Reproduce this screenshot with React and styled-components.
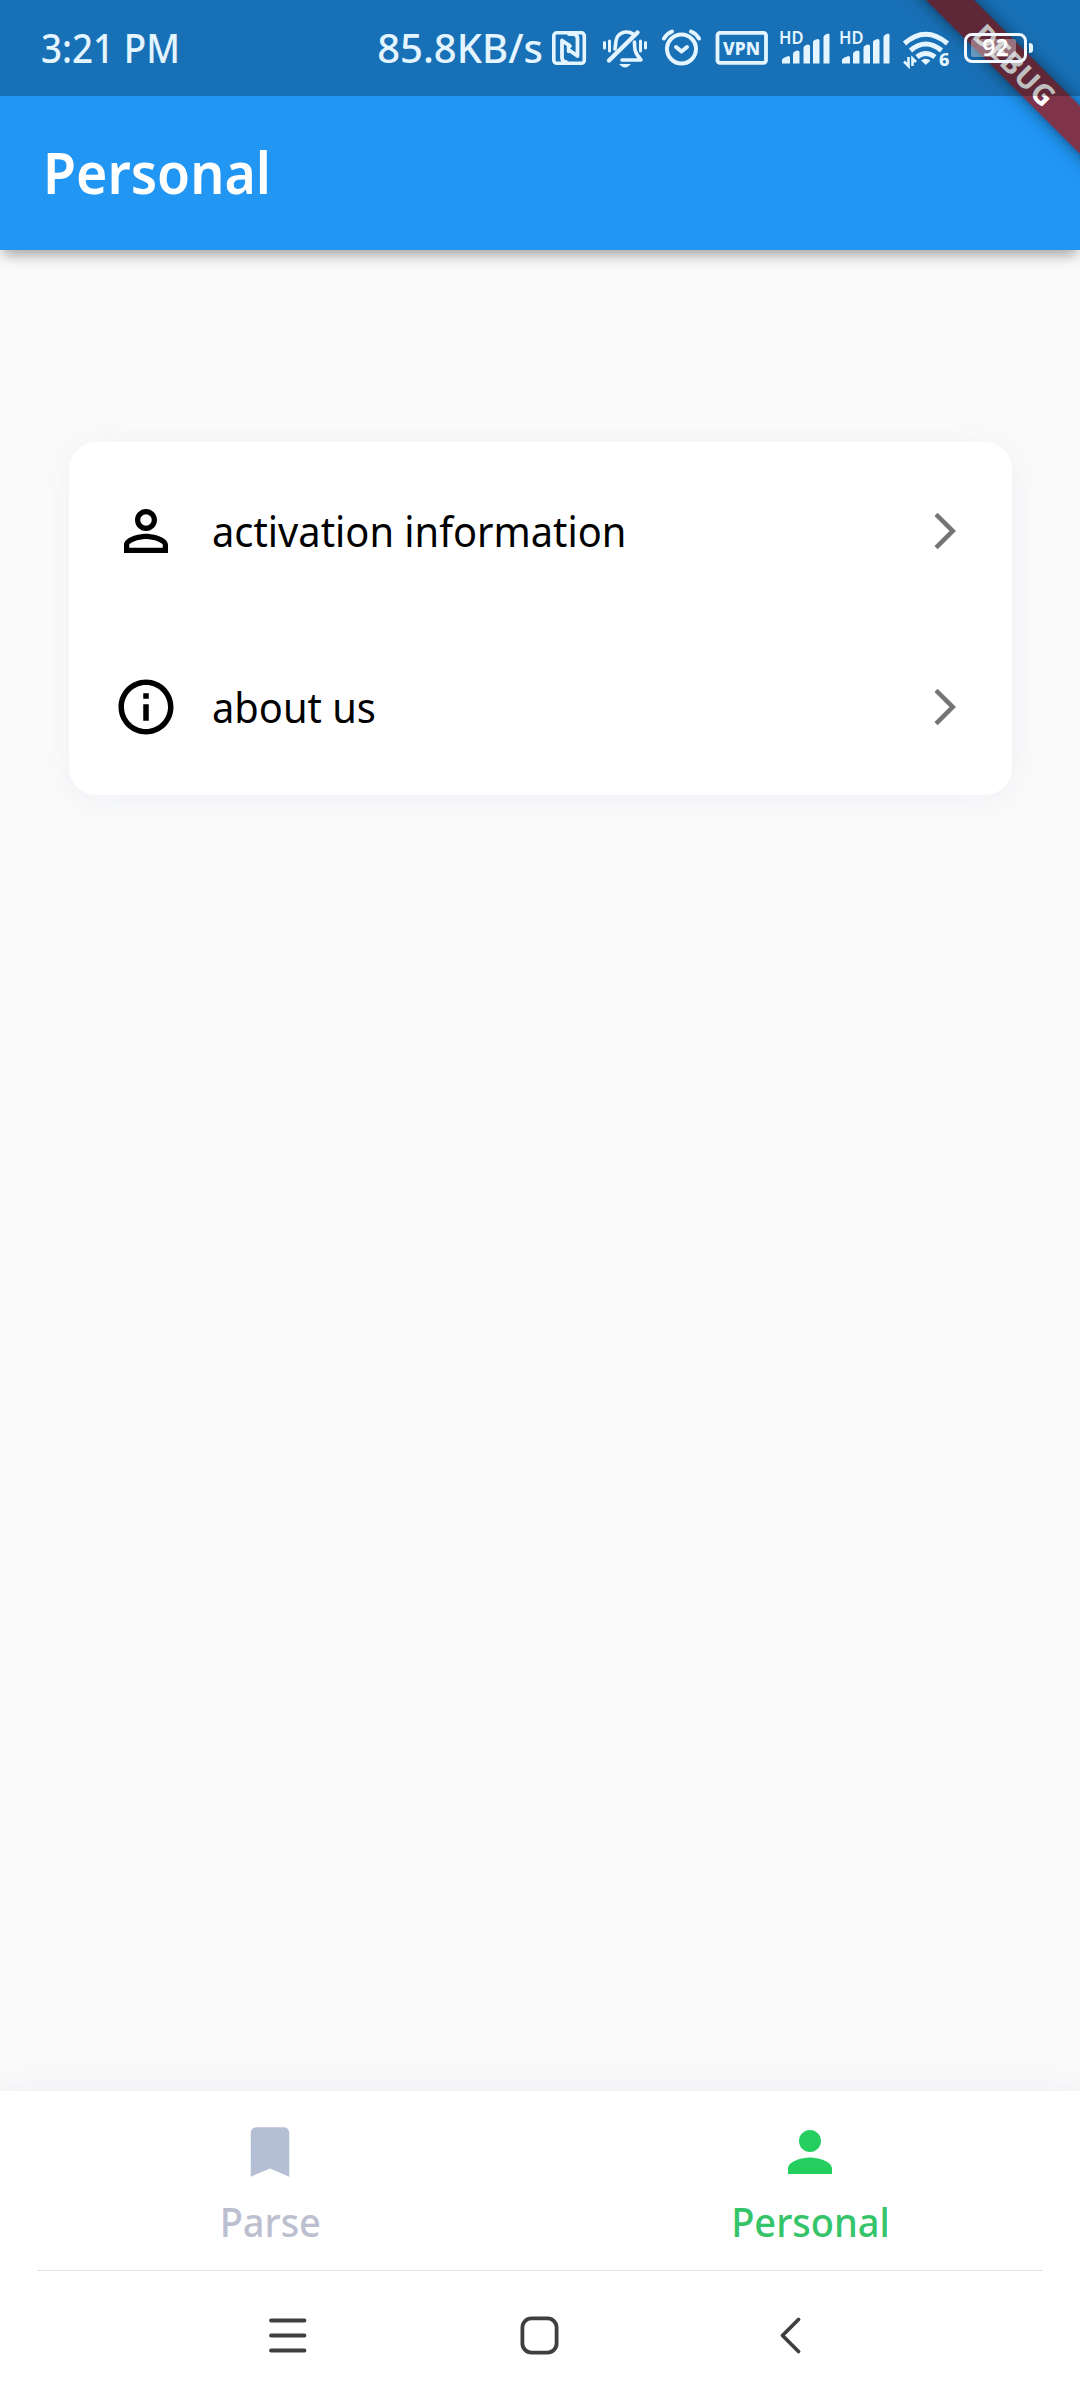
import React from 'react';
import styled, { createGlobalStyle } from 'styled-components';
import { MdPersonOutline, MdInfoOutline, MdArrowForwardIos, MdBookmark, MdPerson } from 'react-icons/md';

const GlobalStyle = createGlobalStyle`
    body {
        margin: 0;
        background-color: #fafafa;
        font-family: 'Noto Sans', 'Open Sans', sans-serif;
    }
`

const Page = styled.div`
    position: relative;
    width: 1080px;
    height: 2400px;
    overflow: hidden;
    display: flex;
    flex-flow: column;
    background-color: #fafafa;
`

const Header = styled.header`
    position: relative;
    height: 250px;
    background-color: #2196f3;
    box-shadow: 0 8px 13px -3px rgba(0, 0, 0, .35);
`

const StatusBar = styled.div`
    position: relative;
    z-index: 2;
    height: 96px;
    box-sizing: border-box;
    padding: 0 47px 0 41px;
    display: flex;
    align-items: flex-start;
    background-color: rgba(0, 0, 0, .25);
    color: #e4f5ff;

    svg {
        display: block;
        flex: none;
    }
`

const StatusText = styled.span`
    line-height: 54px;
    padding-top: 21px;
    padding-right: ${props => props.$gap || 0}px;
    font-size: 40px;
    font-weight: 500;
    white-space: nowrap;
    transform: scaleX(${props => props.$stretch || 1});
    transform-origin: left;
`

const StatusIcons = styled.div`
    margin-left: auto;
    display: flex;
`

const Title = styled.h1`
    margin: 0;
    padding: 36px 0 0 43px;
    line-height: 80px;
    font-size: 58px;
    font-weight: 600;
    color: #fff;

    span {
        display: inline-block;
        transform: scaleX(.925);
        transform-origin: left;
    }
`

const DebugBanner = styled.div`
    position: absolute;
    z-index: 1;
    left: 835px;
    top: 48px;
    width: 360px;
    height: 34px;
    transform: rotate(45deg);
    background-color: #80344c;
    box-shadow: 0 0 16px rgba(0, 0, 0, .5);
    color: #fff;
    font-size: 29px;
    line-height: 33px;
    font-weight: 700;
    letter-spacing: .5px;
    text-align: center;
`

const Content = styled.main`
    flex: 1;
    padding: 192px 68px 0 69px;
`

const Card = styled.section`
    height: 353px;
    border-radius: 27px;
    background-color: #fff;
    box-shadow: 0 3px 28px rgba(220, 225, 240, .35);
`

const MenuRow = styled.div`
    height: 176px;
    box-sizing: border-box;
    padding: 2px 45px 0 44px;
    display: flex;
    align-items: center;
    color: #000;
`

const MenuLabel = styled.span`
    flex: 1;
    margin-left: 33px;
    font-size: 42px;
    line-height: 56px;
    transform: scaleX(.948);
    transform-origin: left;
`

const BottomBar = styled.footer`
    position: relative;
    height: 309px;
    background-color: #fff;
    box-shadow: 0 0 28px rgba(220, 225, 240, .45);
`

const Tabs = styled.div`
    display: flex;
    height: 179px;
`

const Tab = styled.div`
    flex: 1;
    padding-top: 28px;
    display: flex;
    flex-flow: column;
    align-items: center;
    color: ${props => props.$active ? '#24cf5f' : '#b5bfd3'};
`

const TabLabel = styled.span`
    margin-top: 10px;
    font-size: 40px;
    line-height: 54px;
    font-weight: 550;
    transform: scaleX(.95);
    color: ${props => props.$active ? '#36c46a' : '#bcbfd0'};
`

const Divider = styled.div`
    height: 1px;
    margin: 0 37px;
    background-color: #e2e2e5;
`

const SystemNav = styled.div`
    height: 129px;
    padding: 0 262px 0 261px;
    display: flex;
    justify-content: space-between;
    align-items: center;
`

const NfcIcon = () => (
    <svg width="50" height="96" viewBox="552 0 50 96" fill="none" stroke="currentColor" strokeWidth="3.6" strokeLinejoin="round" strokeLinecap="round">
        <rect x="553.8" y="32.8" width="30.5" height="30.5" rx="3" />
        <path d="M569 34H573Q577.5 34 577.5 39V56L569 50M570 46L562 40.5V57Q562 62 566 62" strokeWidth="3.8" />
        <path d="M568.5 44.5V51.5" strokeWidth="3.4" />
    </svg>
)

const MuteIcon = () => (
    <svg width="60" height="96" viewBox="602 0 60 96" fill="none" stroke="currentColor" strokeWidth="3.6" strokeLinecap="round" strokeLinejoin="round">
        <path d="M637.5 32.5L609 60.5" strokeWidth="4.4" />
        <path d="M633 34C629 31 622 31 618 36C615 40 616 45 615 49" />
        <path d="M634.5 42C634.5 50 635 53 641 60H622" />
        <path d="M604.5 42.5V48M609.5 41V51M640.5 41V51M645.5 42.5V48" strokeWidth="3" />
        <path d="M619 64H631Q625 71 619 64Z" fill="currentColor" stroke="none" />
    </svg>
)

const AlarmIcon = () => (
    <svg width="53" height="96" viewBox="662 0 53 96" fill="none" stroke="currentColor" strokeWidth="4" strokeLinecap="round" strokeLinejoin="round">
        <circle cx="681.5" cy="49" r="14.5" />
        <path d="M676 47L681.5 51.5L687 47" />
        <path d="M664 38.5Q667 33.5 672 31.5M699 38.5Q696 33.5 691 31.5" />
    </svg>
)

const VpnIcon = () => (
    <svg width="63" height="96" viewBox="715 0 63 96" fill="none">
        <rect x="717.5" y="32.8" width="48.5" height="30" rx="2.5" stroke="currentColor" strokeWidth="3.8" />
        <text x="741.5" y="54.5" textAnchor="middle" textLength="37" lengthAdjust="spacingAndGlyphs" fontSize="18.5" fontWeight="800" fill="currentColor">VPN</text>
    </svg>
)

const SignalIcon = () => (
    <svg width="60" height="96" viewBox="778 0 60 96" fill="currentColor">
        <text x="779" y="44" textLength="24.5" lengthAdjust="spacingAndGlyphs" fontSize="17" fontWeight="600">HD</text>
        <path d="M782 63.5V60Q782 58 788.5 56Q790 56 790 58V63.5ZM793 63.5V54Q793 51.5 797.5 50.5Q799.5 50.5 799.5 52V63.5ZM803.5 63.5V48Q803.5 45.5 808 44.5Q810 44.5 810 46V63.5ZM813 63.5V42Q813 40 818 39Q819.5 39 819.5 41V63.5ZM823.5 63.5V37Q823.5 35 828 33.5Q829.5 33.5 829.5 35V63.5Z" />
    </svg>
)

const WifiIcon = () => (
    <svg width="65" height="96" viewBox="898 0 65 96" fill="none" stroke="currentColor" strokeWidth="5">
        <path d="M904.5 43.5Q925.5 25 947.5 43.5" />
        <path d="M910.5 50.5Q925.5 37.5 941.5 50.5" />
        <path d="M917 57Q925.5 50 935 57" />
        <path d="M921 60.5Q925.5 57 930.5 60.5L925.8 65Z" fill="currentColor" stroke="none" />
        <path d="M908.5 57V66L904 61.5M912.5 66V58.5L916 62" strokeWidth="2.6" />
        <text x="939" y="66" fontSize="18" fontWeight="800" fill="currentColor" stroke="none">6</text>
    </svg>
)

const BatteryIcon = () => (
    <svg width="70" height="96" viewBox="963 0 70 96" fill="none">
        <rect x="965.5" y="34.5" width="60" height="27" rx="6.5" stroke="#f1f8ff" strokeWidth="3" />
        <rect x="971" y="39" width="45" height="18" rx="2" fill="#fff" opacity=".35" />
        <path d="M1029 43Q1033 43 1033 46V50Q1033 53 1029 53Z" fill="#e4f5ff" />
        <text x="995.5" y="56" textAnchor="middle" fontSize="23" fontWeight="600" fill="#fff">92</text>
    </svg>
)

const RecentsIcon = () => (
    <svg width="53" height="53" viewBox="0 0 53 53" fill="none" stroke="#3f3f3f" strokeWidth="3.8" strokeLinecap="round">
        <path d="M10 11.5H43.5M10 26.5H43.5M10 41.5H43.5" />
    </svg>
)

const HomeIcon = () => (
    <svg width="53" height="53" viewBox="0 0 53 53" fill="none" stroke="#3f3f3f" strokeWidth="3.8">
        <rect x="9.4" y="9.4" width="34.2" height="34.2" rx="9" />
    </svg>
)

const BackIcon = () => (
    <svg width="53" height="53" viewBox="0 0 53 53" fill="none" stroke="#3f3f3f" strokeWidth="3.8" strokeLinecap="round" strokeLinejoin="round">
        <path d="M33.5 10.5L17.5 26.5L33.5 42.5" />
    </svg>
)

const menu = [
    { label: 'activation information', Icon: MdPersonOutline },
    { label: 'about us', Icon: MdInfoOutline },
]

const tabs = [
    { label: 'Parse', Icon: MdBookmark },
    { label: 'Personal', Icon: MdPerson, active: true },
]

function App() {

    return (
        <Page>
            <GlobalStyle />
            <Header>
                <DebugBanner>DEBUG</DebugBanner>
                <StatusBar>
                    <StatusText $stretch={0.92}>3:21 PM</StatusText>
                    <StatusIcons>
                        <StatusText $gap={9}>85.8KB/s</StatusText>
                        <NfcIcon />
                        <MuteIcon />
                        <AlarmIcon />
                        <VpnIcon />
                        <SignalIcon />
                        <SignalIcon />
                        <WifiIcon />
                        <BatteryIcon />
                    </StatusIcons>
                </StatusBar>
                <Title><span>Personal</span></Title>
            </Header>
            <Content>
                <Card>
                    {menu.map(({ label, Icon }) =>
                        <MenuRow key={label}>
                            <Icon size={66} />
                            <MenuLabel>{label}</MenuLabel>
                            <MdArrowForwardIos size={44} color='#757575' />
                        </MenuRow>)}
                </Card>
            </Content>
            <BottomBar>
                <Tabs>
                    {tabs.map(({ label, Icon, active }) =>
                        <Tab key={label} $active={active}>
                            <Icon size={66} />
                            <TabLabel $active={active}>{label}</TabLabel>
                        </Tab>)}
                </Tabs>
                <Divider />
                <SystemNav>
                    <RecentsIcon />
                    <HomeIcon />
                    <BackIcon />
                </SystemNav>
            </BottomBar>
        </Page>
    )
}

export default App;
